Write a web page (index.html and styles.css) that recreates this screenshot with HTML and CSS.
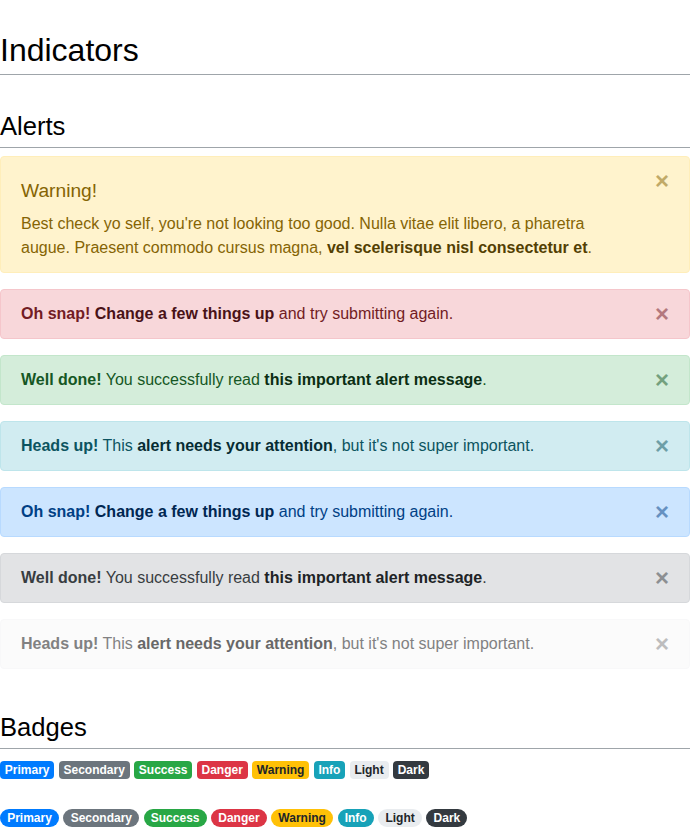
FILE: index.html
```html
<!DOCTYPE html>
<html lang="en">
<head>
<meta charset="utf-8">
<title>Indicators</title>
<link rel="stylesheet" href="styles.css">
</head>
<body>
<main class="page">
  <h1 class="page-title">Indicators</h1>

  <section class="block block-alerts">
    <h2 class="block-title">Alerts</h2>
    <div class="alert-list">
      <div class="alert alert-warning">
        <button type="button" class="close">&times;</button>
        <h4 class="alert-heading">Warning!</h4>
        <p class="alert-text">Best check yo self, you're not looking too good. Nulla vitae elit libero, a pharetra augue. Praesent commodo cursus magna, <a href="#" class="alert-link">vel scelerisque nisl consectetur et</a>.</p>
      </div>
      <div class="alert alert-danger">
        <button type="button" class="close">&times;</button>
        <strong>Oh snap!</strong> <a href="#" class="alert-link">Change a few things up</a> and try submitting again.
      </div>
      <div class="alert alert-success">
        <button type="button" class="close">&times;</button>
        <strong>Well done!</strong> You successfully read <a href="#" class="alert-link">this important alert message</a>.
      </div>
      <div class="alert alert-info">
        <button type="button" class="close">&times;</button>
        <strong>Heads up!</strong> This <a href="#" class="alert-link">alert needs your attention</a>, but it's not super important.
      </div>
      <div class="alert alert-primary">
        <button type="button" class="close">&times;</button>
        <strong>Oh snap!</strong> <a href="#" class="alert-link">Change a few things up</a> and try submitting again.
      </div>
      <div class="alert alert-secondary">
        <button type="button" class="close">&times;</button>
        <strong>Well done!</strong> You successfully read <a href="#" class="alert-link">this important alert message</a>.
      </div>
      <div class="alert alert-light">
        <button type="button" class="close">&times;</button>
        <strong>Heads up!</strong> This <a href="#" class="alert-link">alert needs your attention</a>, but it's not super important.
      </div>
    </div>
  </section>

  <section class="block block-badges">
    <h2 class="block-title">Badges</h2>
    <div class="badge-row">
      <span class="badge badge-primary">Primary</span>
      <span class="badge badge-secondary">Secondary</span>
      <span class="badge badge-success">Success</span>
      <span class="badge badge-danger">Danger</span>
      <span class="badge badge-warning">Warning</span>
      <span class="badge badge-info">Info</span>
      <span class="badge badge-light">Light</span>
      <span class="badge badge-dark">Dark</span>
    </div>
    <div class="badge-row badge-row-pills">
      <span class="badge badge-pill badge-primary">Primary</span>
      <span class="badge badge-pill badge-secondary">Secondary</span>
      <span class="badge badge-pill badge-success">Success</span>
      <span class="badge badge-pill badge-danger">Danger</span>
      <span class="badge badge-pill badge-warning">Warning</span>
      <span class="badge badge-pill badge-info">Info</span>
      <span class="badge badge-pill badge-light">Light</span>
      <span class="badge badge-pill badge-dark">Dark</span>
    </div>
  </section>
</main>
</body>
</html>
```

FILE: styles.css
```css
* {
  box-sizing: border-box;
}

html, body {
  margin: 0;
  padding: 0;
  background: #fff;
}

body {
  font-family: "Liberation Sans", Arial, sans-serif;
  font-size: 16px;
  line-height: 24px;
  color: #212529;
}

.page {
  display: flex;
  flex-direction: column;
  width: 690px;
}

.page-title {
  margin: 31px 0 0;
  padding: 0 0 5px;
  font-size: 32px;
  font-weight: 400;
  line-height: 38px;
  color: #000;
  border-bottom: 1px solid #9fa5aa;
}

.block {
  display: flex;
  flex-direction: column;
}

.block-alerts {
  margin-top: 36px;
}

.block-badges {
  margin-top: 43px;
}

.block-title {
  margin: 0;
  padding: 0 0 5px;
  font-size: 25.6px;
  font-weight: 400;
  line-height: 31px;
  color: #000;
  border-bottom: 1px solid #9fa5aa;
}

/* Alerts */
.alert-list {
  display: flex;
  flex-direction: column;
  gap: 16px;
  margin-top: 8px;
}

.alert {
  position: relative;
  padding: 12px 64px 12px 20px;
  border: 1px solid transparent;
  border-radius: 4px;
}

.alert strong {
  font-weight: 700;
}

.alert-link {
  font-weight: 700;
  text-decoration: none;
}

.alert-heading {
  margin: 9px 0 8px;
  font-size: 19.2px;
  font-weight: 400;
  line-height: 26px;
  color: inherit;
}

.alert-text {
  margin: 0;
}

.close {
  position: absolute;
  top: 0;
  right: 0;
  padding: 12px 20px;
  margin: 0;
  border: 0;
  background: transparent;
  font-family: "Liberation Sans", Arial, sans-serif;
  font-size: 24px;
  font-weight: 700;
  line-height: 24px;
  color: inherit;
  opacity: 0.5;
  cursor: pointer;
}

.alert-warning {
  color: #856404;
  background: #fff3cd;
  border-color: #ffeeba;
}
.alert-warning .alert-link { color: #533f03; }

.alert-danger {
  color: #721c24;
  background: #f8d7da;
  border-color: #f5c6cb;
}
.alert-danger .alert-link { color: #491217; }

.alert-success {
  color: #155724;
  background: #d4edda;
  border-color: #c3e6cb;
}
.alert-success .alert-link { color: #0b2e13; }

.alert-info {
  color: #0c5460;
  background: #d1ecf1;
  border-color: #bee5eb;
}
.alert-info .alert-link { color: #062c33; }

.alert-primary {
  color: #004085;
  background: #cce5ff;
  border-color: #b8daff;
}
.alert-primary .alert-link { color: #002752; }

.alert-secondary {
  color: #383d41;
  background: #e2e3e5;
  border-color: #d6d8db;
}
.alert-secondary .alert-link { color: #202326; }

.alert-light {
  color: #818182;
  background: #fbfbfb;
  border-color: #f8f8f9;
}
.alert-light .alert-link { color: #686868; }

/* Badges */
.badge-row {
  display: flex;
  align-items: flex-start;
  gap: 4.4px;
  margin-top: 12px;
}

.badge-row-pills {
  margin-top: 30px;
}

.badge {
  display: inline-block;
  padding: 3px 4.8px;
  font-size: 12px;
  font-weight: 700;
  line-height: 12px;
  white-space: nowrap;
  border-radius: 4px;
  color: #fff;
}

.badge-pill {
  padding-left: 7.2px;
  padding-right: 7.2px;
  border-radius: 10rem;
}

.badge-primary { background: #007bff; }
.badge-secondary { background: #6c757d; }
.badge-success { background: #28a745; }
.badge-danger { background: #dc3545; }
.badge-warning { background: #ffc107; color: #212529; }
.badge-info { background: #17a2b8; }
.badge-light { background: #e9ecef; color: #212529; }
.badge-dark { background: #343a40; }
```
